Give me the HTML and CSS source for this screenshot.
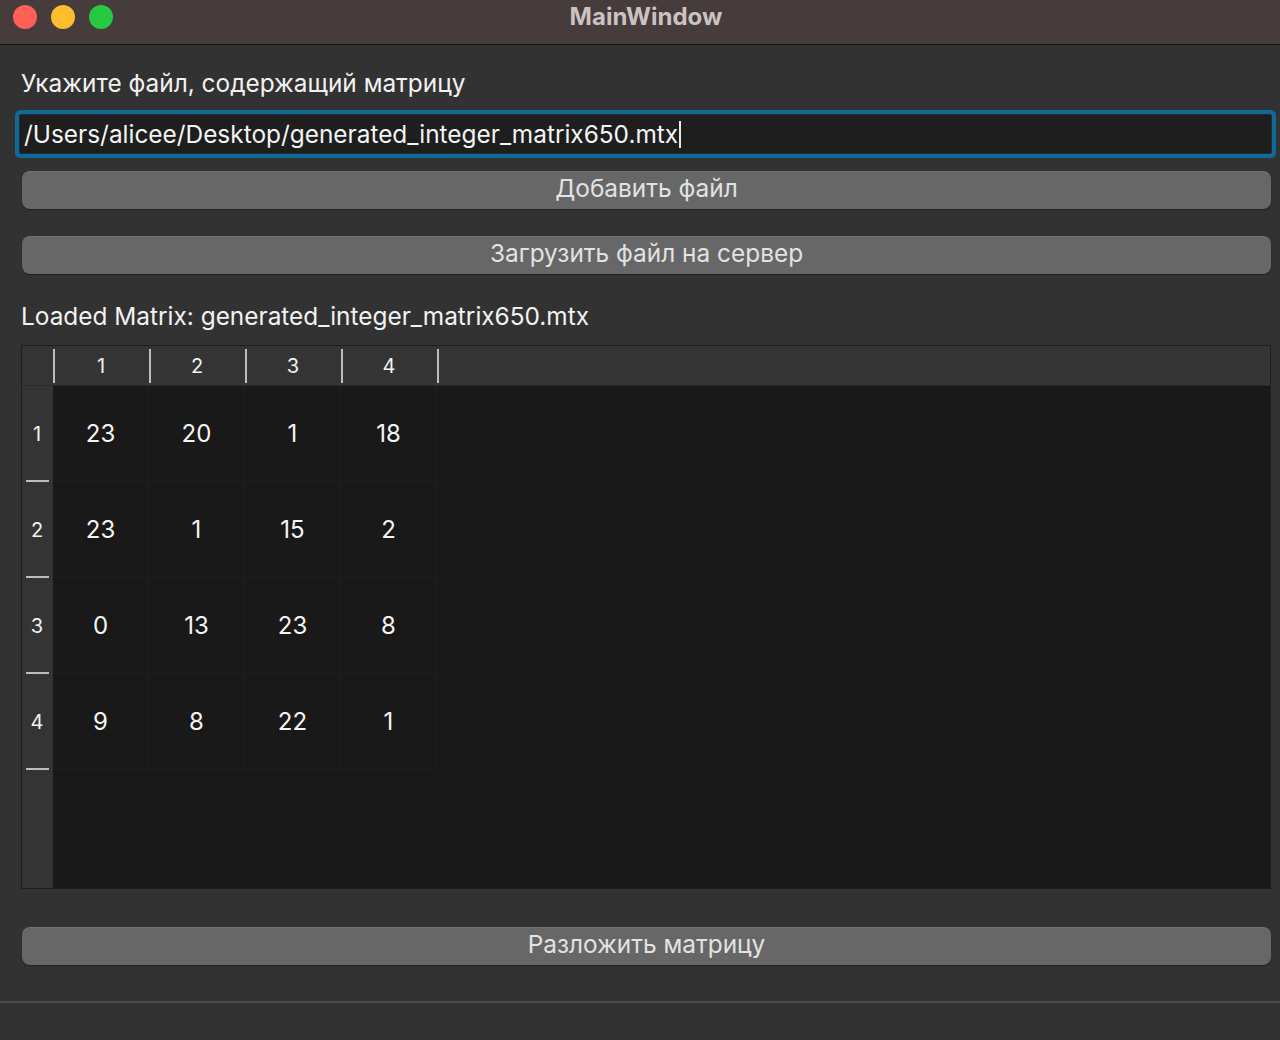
FILE: index.html
```html
<!DOCTYPE html>
<html lang="ru">
<head>
<meta charset="utf-8">
<title>MainWindow</title>
<link rel="stylesheet" href="styles.css">
</head>
<body>
<div class="window">
  <header class="titlebar">
    <div class="lights">
      <span class="light red"></span>
      <span class="light yellow"></span>
      <span class="light green"></span>
    </div>
    <div class="title">MainWindow</div>
  </header>
  <main class="content">
    <div class="label first">Укажите файл, содержащий матрицу</div>
    <div class="input"><span class="value">/Users/alicee/Desktop/generated_integer_matrix650.mtx</span><span class="caret"></span></div>
    <button class="btn b1">Добавить файл</button>
    <button class="btn b2">Загрузить файл на сервер</button>
    <div class="label second">Loaded Matrix: generated_integer_matrix650.mtx</div>
    <div class="table">
      <div class="thead">
        <div class="corner"></div>
        <span class="hsep"></span><div class="hcell">1</div>
        <span class="hsep"></span><div class="hcell">2</div>
        <span class="hsep"></span><div class="hcell">3</div>
        <span class="hsep"></span><div class="hcell">4</div>
        <span class="hsep"></span>
      </div>
      <div class="tbody">
        <div class="rowheads">
          <div class="rh"><span class="rnum">1</span><span class="dash"></span></div>
          <div class="rh"><span class="rnum">2</span><span class="dash"></span></div>
          <div class="rh"><span class="rnum">3</span><span class="dash"></span></div>
          <div class="rh"><span class="rnum">4</span><span class="dash"></span></div>
        </div>
        <div class="grid">
          <div class="cell">23</div><div class="cell">20</div><div class="cell">1</div><div class="cell">18</div>
          <div class="cell">23</div><div class="cell">1</div><div class="cell">15</div><div class="cell">2</div>
          <div class="cell">0</div><div class="cell">13</div><div class="cell">23</div><div class="cell">8</div>
          <div class="cell">9</div><div class="cell">8</div><div class="cell">22</div><div class="cell">1</div>
        </div>
      </div>
    </div>
    <button class="btn b3">Разложить матрицу</button>
  </main>
  <footer class="status"></footer>
</div>
</body>
</html>
```

FILE: styles.css
```css
* { box-sizing: border-box; }
html, body { margin: 0; padding: 0; }
body {
  width: 1280px;
  height: 1040px;
  overflow: hidden;
  background: #323232;
  font-family: Inter, "Noto Sans", "DejaVu Sans", sans-serif;
  color: #f2f2f2;
}
.window { display: flex; flex-direction: column; height: 1040px; }

.titlebar {
  height: 45px;
  flex: none;
  background: #463c3c;
  border-bottom: 1px solid #141212;
  display: flex;
  align-items: center;
  justify-content: center;
  position: relative;
}
.lights {
  position: absolute;
  left: 13px;
  top: 5px;
  display: flex;
  gap: 14px;
}
.light { width: 24px; height: 24px; border-radius: 50%; display: block; }
.red { background: #fe5f57; }
.yellow { background: #febc2e; }
.green { background: #28c840; }
.title {
  font-weight: 700;
  font-size: 24px;
  color: #cbc2c2;
  margin-top: -12px;
  margin-left: 12px;
}

.content {
  display: flex;
  flex-direction: column;
  padding: 0 10px 0 21px;
}
.label {
  font-size: 24.4px;
  line-height: 28px;
  color: #f2f2f2;
}
.label.first { margin-top: 24px; }
.label.second { margin-top: 28px; }

.input {
  margin: 17px -2px 0 -2px;
  height: 40px;
  background: #1e1e1e;
  border: 1px solid #2a2a2a;
  box-shadow: 0 0 0 4px #0f6a9c;
  border-radius: 2px;
  display: flex;
  align-items: center;
  padding-left: 4px;
  font-size: 24.4px;
  color: #f5f5f5;
}
.caret {
  display: inline-block;
  width: 1.5px;
  height: 27px;
  background: #e8e8e8;
  margin-left: 1px;
}

.btn {
  display: block;
  width: 1249px;
  margin-left: 1px;
  height: 38px;
  border: none;
  border-radius: 8px;
  background: #676767;
  box-shadow: 0 1px 1px rgba(0,0,0,0.35), inset 0 1px 0 rgba(255,255,255,0.08);
  color: #e2e2e2;
  font-family: Inter, "Noto Sans", "DejaVu Sans", sans-serif;
  font-size: 24.4px;
  padding: 0 0 3px 0;
  line-height: 35px;
  text-align: center;
}
.b1 { margin-top: 17px; }
.b2 { margin-top: 27px; }
.b3 { margin-top: 38px; }

.table {
  margin-top: 15px;
  width: 1250px;
  height: 544px;
  border: 1px solid #1f1f1f;
  background: #191919;
  display: flex;
  flex-direction: column;
}
.thead {
  height: 40px;
  flex: none;
  background: #343434;
  display: flex;
  align-items: center;
  border-bottom: 1px solid #2b2b2b;
}
.corner { width: 31px; flex: none; }
.hsep { width: 2px; height: 34px; background: #bdbdbd; flex: none; }
.hcell {
  width: 94px;
  flex: none;
  text-align: center;
  font-size: 20px;
  color: #f2f2f2;
  padding-right: 2px;
}
.tbody { flex: 1; display: flex; }
.rowheads {
  width: 31px;
  flex: none;
  background: #343434;
  display: flex;
  flex-direction: column;
}
.rh {
  height: 96px;
  display: flex;
  flex-direction: column;
  align-items: center;
  justify-content: flex-end;
}
.rnum {
  font-size: 20px;
  color: #f2f2f2;
  margin-bottom: 34px;
  margin-right: 1px;
}
.dash {
  width: 23px;
  height: 2px;
  background: #bdbdbd;
}
.grid {
  display: grid;
  grid-template-columns: repeat(4, 96px);
  grid-auto-rows: 96px;
  align-self: flex-start;
}
.cell {
  display: flex;
  align-items: center;
  justify-content: center;
  font-size: 24px;
  color: #f5f5f5;
  border-right: 1px solid #1e1e1e;
  border-bottom: 1px solid #1e1e1e;
}

.status {
  margin-top: 36px;
  flex: 1;
  border-top: 2px solid #4d4d4d;
  background: #323232;
}
```
